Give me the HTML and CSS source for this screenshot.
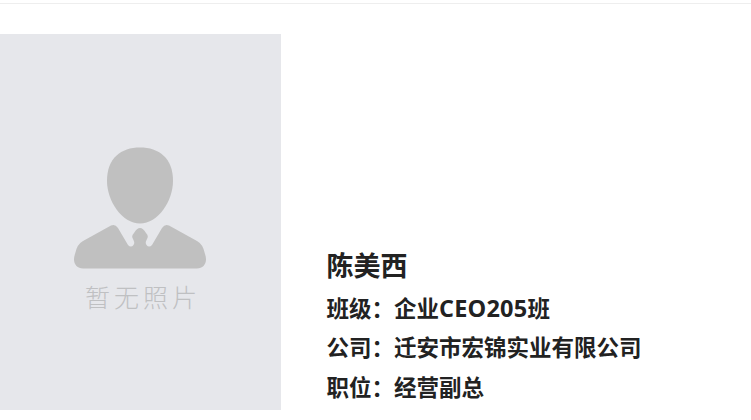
FILE: index.html
```
<!DOCTYPE html>
<html lang="zh-CN">
<head>
    <meta charset="UTF-8">
    <meta name="viewport" content="width=device-width, initial-scale=1.0">
    <title>陈美西</title>
    <link rel="stylesheet" href="styles.css">
</head>
<body>
    <div class="profile">
        <div class="photo">
            <svg class="avatar" width="134" height="124" viewBox="0 0 134 124">
                <path d="M67 .5C86 .5 100 11 100 34C100 54 85 76.500 67 76.500C49 76.500 34 54 34 34C34 11 48 .5 67 .5Z"/>
                <path d="M38 78.500Q42 76.500 45 81L55 98Q58 101 60.500 98C62 96 61 94 60 92Q58 89 61 86Q64 81 67 81Q70 81 73 86Q76 89 74 92C73 94 72 96 73.500 98Q76 101 79 98L89 81Q92 76.500 96 78.500L124 94Q130 97 132 107C135 115 131 121.500 124 121.500H10C3 121.500 -1 115 2 107Q4 97 10 94Z"/>
            </svg>
            <span class="no-photo">暂无照片</span>
        </div>
        <div class="info">
            <h2>陈美西</h2>
            <p>班级：企业<span class="class-no">CEO205</span>班</p>
            <p>公司：迁安市宏锦实业有限公司</p>
            <p>职位：经营副总</p>
        </div>
    </div>
</body>
</html>
```
FILE: styles.css
```
body {
    margin: 0;
    padding-top: 3px;
    background-color: #fff;
    font-family: "Open Sans", "Noto Sans CJK SC", sans-serif;
    color: #222;
}

.profile {
    display: flex;
    height: 376px;
    padding-top: 30px;
    border-top: 1px solid #eee;
}

.photo {
    display: flex;
    flex-direction: column;
    align-items: center;
    width: 281px;
    height: 376px;
    padding: 113px 2px 0 0;
    box-sizing: border-box;
    background-color: #e6e7eb;
}

.avatar {
    fill: #c0c0c0;
}

.no-photo {
    margin-top: 7px;
    padding-left: 7px;
    font-family: "Noto Sans CJK SC", sans-serif;
    font-size: 25px;
    font-weight: 300;
    line-height: 36px;
    letter-spacing: 4px;
    color: #bfc0c2;
}

.info {
    display: flex;
    flex-direction: column;
    justify-content: flex-end;
    margin-left: 45.5px;
    padding-bottom: 3px;
}

.info h2 {
    margin: 0;
    font-size: 27px;
    line-height: 46px;
}

.info p {
    margin: 0;
    font-size: 22.5px;
    font-weight: bold;
    line-height: 39.5px;
}

.class-no {
    font-size: 23.5px;
    line-height: 1;
    letter-spacing: 0.2px;
}
```
